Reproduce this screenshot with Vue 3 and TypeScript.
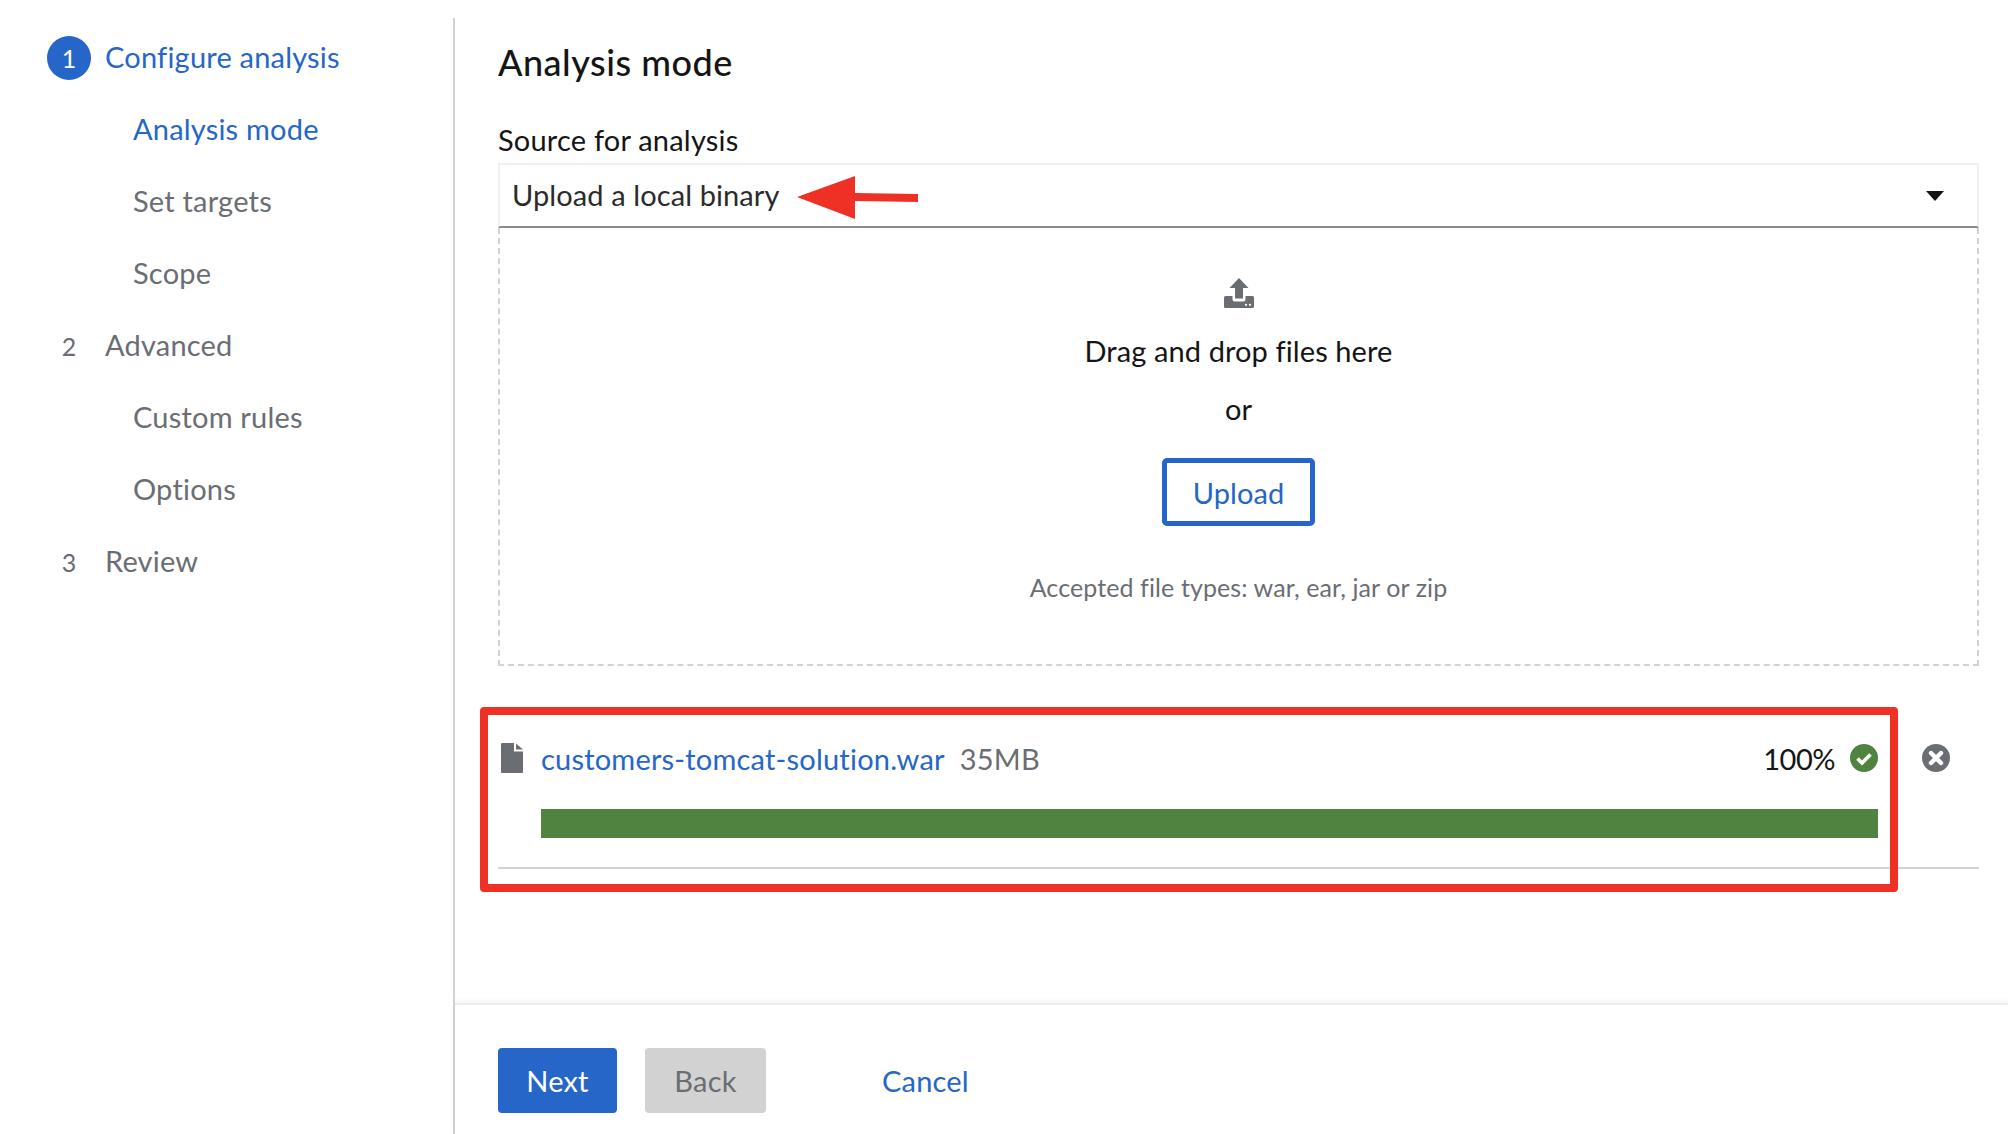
<script setup lang="ts">
// 向导左侧步骤
interface Step { no?: number; label: string; sub?: boolean; active?: boolean }

const steps: Step[] = [
  { no: 1, label: 'Configure analysis', active: true },
  { label: 'Analysis mode', sub: true, active: true },
  { label: 'Set targets', sub: true },
  { label: 'Scope', sub: true },
  { no: 2, label: 'Advanced' },
  { label: 'Custom rules', sub: true },
  { label: 'Options', sub: true },
  { no: 3, label: 'Review' },
]
</script>

<template>
  <div class="page">
    <nav class="side">
      <div
        v-for="s in steps"
        :key="s.label"
        class="step"
        :class="{ sub: s.sub, active: s.active }"
      >
        <span v-if="s.no" class="num">{{ s.no }}</span>
        <span class="txt">{{ s.label }}</span>
      </div>
    </nav>

    <main class="main">
      <div class="body">
        <h1>Analysis mode</h1>
        <div class="label">Source for analysis</div>
        <div class="select">
          <span class="sel-text">Upload a local binary</span>
          <i class="caret"></i>
        </div>

        <div class="drop">
          <svg class="up-icon" width="30" height="30" viewBox="0 0 30 30">
            <path fill="#6a6e73" d="M15 0 24.5 10H19V20.5H11V10H5.5Z" />
            <path fill="#6a6e73" d="M1.5 18H8.5V21.5Q8.5 23.5 10.5 23.5H19.5Q21.5 23.5 21.5 21.5V18H28.5Q30 18 30 19.5V28.5Q30 30 28.5 30H1.5Q0 30 0 28.5V19.5Q0 18 1.5 18Z" />
            <circle cx="22" cy="26.8" r="1.1" fill="#fff" />
            <circle cx="26" cy="26.8" r="1.1" fill="#fff" />
          </svg>
          <div class="drag">Drag and drop files here</div>
          <div class="or">or</div>
          <button class="upload">Upload</button>
          <div class="accept">Accepted file types: war, ear, jar or zip</div>
        </div>

        <div class="file">
          <div class="file-top">
            <svg class="file-icon" width="22" height="30" viewBox="0 0 22 30">
              <path fill="#6a6e73" d="M1 0H13V8.5H22V29Q22 30 21 30H1Q0 30 0 29V1Q0 0 1 0Z" />
              <path fill="#6a6e73" d="M15 0.5 22 6.5H15Z" />
            </svg>
            <a class="name">customers-tomcat-solution.war</a>
            <span class="size">35MB</span>
            <span class="pct">100%</span>
            <svg class="ok" width="28" height="28" viewBox="0 0 28 28">
              <circle cx="14" cy="14" r="14" fill="#4f833f" />
              <path d="M7.5 14.5 12 19 20.5 10.5" fill="none" stroke="#fff" stroke-width="3.6" />
            </svg>
            <svg class="close" width="28" height="28" viewBox="0 0 28 28">
              <circle cx="14" cy="14" r="14" fill="#6a6e73" />
              <path d="M9 9 19 19M19 9 9 19" fill="none" stroke="#fff" stroke-width="4.4" stroke-linecap="round" />
            </svg>
          </div>
          <div class="bar"></div>
        </div>
      </div>

      <footer class="foot">
        <button class="btn next">Next</button>
        <button class="btn back">Back</button>
        <a class="cancel">Cancel</a>
      </footer>
    </main>

    <!-- 截图上的红色标注 -->
    <svg class="arrow" width="122" height="44" viewBox="0 0 122 44">
      <path fill="#ee3124" d="M0 21 58 0V17L121 18V26L58 25V43Z" />
    </svg>
    <div class="mark"></div>
  </div>
</template>

<style>
body {
  margin: 0;
  background: #fff;
}
</style>

<style scoped>
.page {
  position: relative;
  display: flex;
  box-sizing: border-box;
  height: 1134px;
  padding-top: 18px;
  overflow: hidden;
  font-family: Lato, "Liberation Sans", sans-serif;
  font-size: 29px;
  letter-spacing: 0.2px;
  color: #151515;
}
.side {
  box-sizing: border-box;
  flex: 0 0 455px;
  padding-top: 4px;
  border-right: 2px solid #d2d2d2;
}
.step {
  display: flex;
  align-items: center;
  height: 72px;
  padding-left: 47px;
  color: #6a6e73;
}
.step.sub { padding-left: 133px; }
.step.active { color: #2566c8; }
.txt { margin-top: -3px; }
.num {
  flex: 0 0 44px;
  height: 44px;
  margin-right: 14px;
  border-radius: 50%;
  text-align: center;
  line-height: 44px;
  font-size: 25px;
}
.step.active .num {
  background: #2566c8;
  color: #fff;
}
.main {
  flex: 1;
  display: flex;
  flex-direction: column;
  min-width: 0;
}
.body {
  flex: 1;
  padding: 17px 29px 0 43px;
}
h1 {
  margin: 0;
  height: 54px;
  line-height: 54px;
  font-size: 36px;
  font-weight: 500;
  letter-spacing: 0.5px;
}
.label {
  margin-top: 33px;
  height: 36px;
  line-height: 36px;
}
.select {
  display: flex;
  align-items: center;
  justify-content: space-between;
  box-sizing: border-box;
  height: 65px;
  margin-top: 5px;
  padding: 0 33px 0 12px;
  border: 2px solid #f0f0f0;
  border-bottom-color: #8a8d90;
  color: #2b2b2b;
}
.sel-text {
  margin-top: -3px;
  letter-spacing: 0.1px;
}
.caret {
  width: 0;
  height: 0;
  border-left: 9px solid transparent;
  border-right: 9px solid transparent;
  border-top: 10px solid #151515;
}
.drop {
  display: flex;
  flex-direction: column;
  align-items: center;
  box-sizing: border-box;
  height: 438px;
  border: 2px dashed #d2d2d2;
  border-top: 0;
  letter-spacing: 0.1px;
}
.up-icon { margin-top: 50px; }
.drag {
  margin-top: 25px;
  line-height: 36px;
}
.or {
  margin-top: 22px;
  line-height: 36px;
}
.upload {
  box-sizing: border-box;
  width: 153px;
  height: 68px;
  margin-top: 31px;
  border: 5px solid #2566c8;
  border-radius: 5px;
  background: #fff;
  color: #2566c8;
  font: inherit;
  letter-spacing: inherit;
}
.accept {
  margin-top: 44px;
  line-height: 34px;
  font-size: 25px;
  color: #6a6e73;
}
.file {
  box-sizing: border-box;
  height: 203px;
  padding-top: 75px;
  border-bottom: 2px solid #d2d2d2;
}
.file-top {
  display: flex;
  align-items: center;
  height: 34px;
  padding-left: 3px;
}
.name {
  margin-left: 18px;
  color: #2566c8;
}
.size {
  margin-left: 15px;
  color: #6a6e73;
}
.pct {
  margin-left: auto;
  letter-spacing: -0.5px;
}
.ok { margin-left: 15px; }
.close { margin-left: 44px; margin-right: 29px; }
.bar {
  height: 29px;
  margin: 34px 101px 0 43px;
  background: #4f833f;
}
.foot {
  display: flex;
  align-items: center;
  box-sizing: border-box;
  height: 131px;
  padding: 22px 0 0 43px;
  border-top: 2px solid #ececec;
  box-shadow: 0 -3px 5px rgba(0, 0, 0, 0.04);
}
.btn {
  height: 65px;
  border: 0;
  border-radius: 4px;
  font: inherit;
  letter-spacing: inherit;
}
.next {
  width: 119px;
  background: #2566c8;
  color: #fff;
}
.back {
  width: 121px;
  margin-left: 28px;
  background: #d2d2d2;
  color: #6a6e73;
}
.cancel {
  margin-left: 116px;
  color: #2566c8;
}
.arrow {
  position: absolute;
  left: 797px;
  top: 176px;
}
.mark {
  position: absolute;
  left: 480px;
  top: 707px;
  box-sizing: border-box;
  width: 1418px;
  height: 185px;
  border: 8px solid #ee3124;
  border-radius: 4px;
}
</style>
